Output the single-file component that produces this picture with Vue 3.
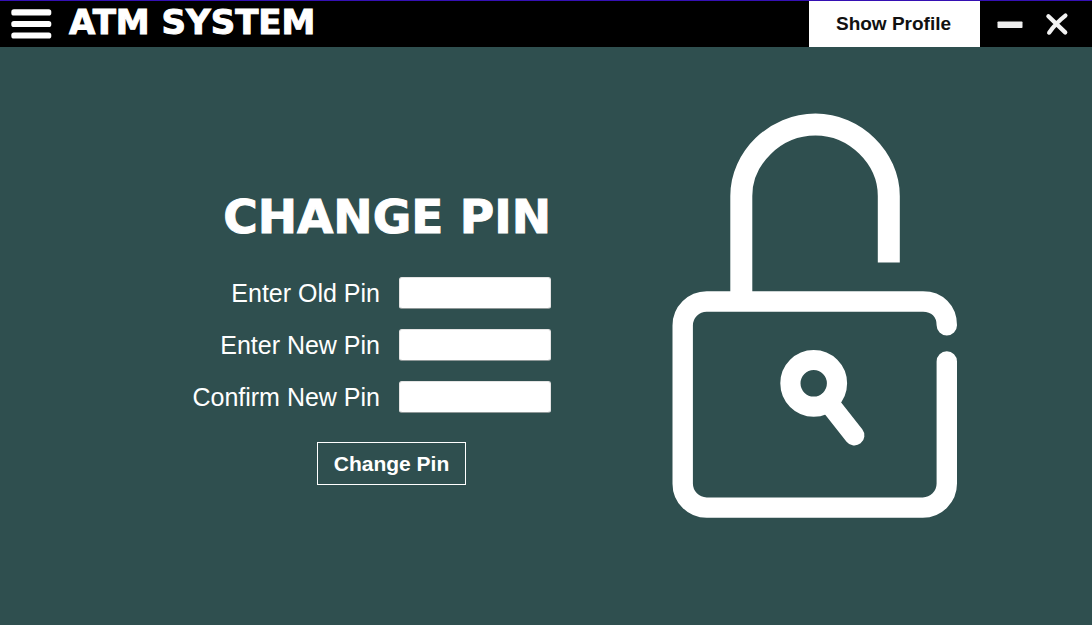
<script setup>
import { reactive } from 'vue'

const fields = [
  { id: 'old-pin', key: 'oldPin', label: 'Enter Old Pin' },
  { id: 'new-pin', key: 'newPin', label: 'Enter New Pin' },
  { id: 'confirm-pin', key: 'confirmPin', label: 'Confirm New Pin' },
]

const form = reactive({ oldPin: '', newPin: '', confirmPin: '' })
</script>

<template>
  <div class="window">
    <header class="bar">
      <button class="icon-button menu" type="button" aria-label="Menu">
        <svg width="42" height="32" viewBox="0 0 42 32" aria-hidden="true">
          <g fill="#fff">
            <rect x="1.3" y="1.3" width="40" height="6.2" rx="2.6" />
            <rect x="1.3" y="12.9" width="40" height="6.2" rx="2.6" />
            <rect x="1.3" y="24.4" width="40" height="6.2" rx="2.6" />
          </g>
        </svg>
      </button>
      <h1 class="brand">ATM SYSTEM</h1>
      <button class="profile" type="button">Show Profile</button>
      <button class="icon-button" type="button" aria-label="Minimize">
        <svg width="26" height="24" viewBox="0 0 26 24" aria-hidden="true">
          <rect x="0.5" y="9.5" width="25" height="6.5" rx="0.8" fill="#eee" />
        </svg>
      </button>
      <button class="icon-button close" type="button" aria-label="Close">
        <svg width="24" height="24" viewBox="0 0 24 24" aria-hidden="true">
          <path d="M3.4 4.2 20.2 20.4M20.4 3.6C14 8.6 8.4 14.4 4.2 20.6" fill="none" stroke="#f2f2f2" stroke-width="4.3" stroke-linecap="round" />
        </svg>
      </button>
    </header>

    <main class="content">
      <form class="pin-form" @submit.prevent>
        <h2 class="title">CHANGE PIN</h2>
        <div class="fields">
          <template v-for="field in fields" :key="field.id">
            <label :for="field.id">{{ field.label }}</label>
            <input :id="field.id" v-model="form[field.key]" type="password" />
          </template>
        </div>
        <button class="submit" type="submit">Change Pin</button>
      </form>

      <svg class="lock" width="286" height="406" viewBox="672 113 286 406" aria-hidden="true">
        <g fill="none" stroke="#fff">
          <path d="M741.3 300V196C741.3 158 775 124.5 815.5 124.5C855 124.5 888.8 158 888.8 196V262.5" stroke-width="22" />
          <path
            d="M946.8 325.3C946.8 311 937 301.5 923 301.5H706.7A24 24 0 0 0 682.7 325.5V483.5A24 24 0 0 0 706.7 507.6H922.8A24 24 0 0 0 946.8 483.6V361.5"
            stroke-width="20.4"
            stroke-linecap="round"
          />
          <circle cx="813.7" cy="383.3" r="23.3" stroke-width="20.2" />
          <path d="M828 402 854.4 435.5" stroke-width="20" stroke-linecap="round" />
        </g>
      </svg>
    </main>
  </div>
</template>

<style>
body {
  background: #2f4f4f;
}
</style>

<style scoped>
.window {
  min-height: 100vh;
  display: flex;
  flex-direction: column;
  background: #2f4f4f;
  color: #fff;
  font-family: "Liberation Sans", Arial, sans-serif;
}

button {
  font-family: inherit;
  cursor: pointer;
}

.bar {
  display: flex;
  align-items: center;
  height: 46px;
  padding: 0 23px 0 10px;
  border-top: 1px solid #3510b4;
  background: #000;
}

.icon-button {
  display: flex;
  padding: 0;
  border: 0;
  background: none;
}

.menu {
  margin-right: 17px;
}

.brand {
  flex: 1;
  margin: 0;
  padding-bottom: 4px;
  font: bold 34px/40px "DejaVu Sans", Verdana, sans-serif;
  -webkit-text-stroke: 1px #fff;
}

.profile {
  align-self: stretch;
  width: 171px;
  margin-right: 17px;
  padding: 0 2px 1px 0;
  border: 0;
  background: #fff;
  color: #111;
  font-size: 19px;
  font-weight: bold;
}

.close {
  margin-left: 22px;
}

.content {
  flex: 1;
  display: grid;
  grid-template-columns: 551fr 541fr;
  align-items: start;
  padding: 66px 0 40px;
}

.pin-form {
  display: flex;
  flex-direction: column;
  align-items: flex-end;
  justify-self: end;
  padding-top: 80px;
}

.title {
  margin: 0 0 36px;
  font: bold 47px/48px "DejaVu Sans", Verdana, sans-serif;
  -webkit-text-stroke: 1px #fff;
}

.fields {
  display: grid;
  grid-template-columns: auto 152px;
  align-items: center;
  gap: 20px 19px;
}

label {
  text-align: right;
  font-size: 25px;
  line-height: 32px;
}

input {
  box-sizing: border-box;
  width: 100%;
  height: 32px;
  padding: 0 8px;
  border: 1px solid #e4e4e4;
  border-bottom-color: #8f9898;
  border-radius: 3px;
  background: #fff;
  font-size: 20px;
}

.submit {
  width: 149px;
  height: 43px;
  margin: 29px 85px 0 0;
  padding: 0;
  border: 1px solid #fff;
  background: transparent;
  color: #fff;
  font-size: 21px;
  font-weight: bold;
}

.lock {
  margin-left: 121px;
}
</style>
